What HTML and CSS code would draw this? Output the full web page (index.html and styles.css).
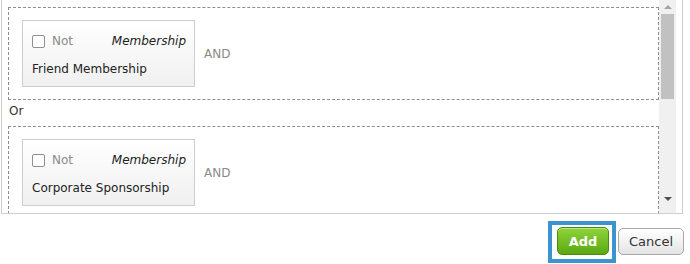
FILE: index.html
```html
<!DOCTYPE html>
<html>
<head>
<meta charset="utf-8">
<link rel="stylesheet" href="styles.css">
</head>
<body>
<div class="panel">
  <div class="content">
    <div class="group">
      <div class="card">
        <div class="card-top">
          <label class="not"><span class="box"></span>Not</label>
          <span class="type">Membership</span>
        </div>
        <div class="name">Friend Membership</div>
      </div>
      <span class="and">AND</span>
    </div>
    <div class="or">Or</div>
    <div class="group">
      <div class="card">
        <div class="card-top">
          <label class="not"><span class="box"></span>Not</label>
          <span class="type">Membership</span>
        </div>
        <div class="name">Corporate Sponsorship</div>
      </div>
      <span class="and">AND</span>
    </div>
  </div>
  <div class="scrollbar">
    <span class="arrow up"></span>
    <span class="thumb"></span>
    <span class="spacer"></span>
    <span class="arrow down"></span>
  </div>
</div>
<div class="footer">
  <span class="focus"><button class="btn add">Add</button></span>
  <button class="btn cancel">Cancel</button>
</div>
</body>
</html>
```
FILE: styles.css
```css
html, body {
  margin: 0;
  padding: 0;
  background: #fff;
  font-family: "DejaVu Sans", Verdana, sans-serif;
  font-size: 12px;
  color: #222;
}
.panel {
  margin: -1px 0 0 1px;
  width: 682px;
  height: 215px;
  box-sizing: border-box;
  border: 1px solid #cfcfcf;
  display: flex;
  padding-right: 6px;
  overflow: hidden;
}
.content {
  flex: 1;
  padding: 7px 0 0 6px;
  overflow: hidden;
}
.group {
  border: 1px dashed #8e8e8e;
  padding: 12px 13px;
  display: flex;
  align-items: center;
}
.card {
  width: 173px;
  height: 67px;
  box-sizing: border-box;
  border: 1px solid #cdcdcd;
  background: linear-gradient(#ffffff, #f0f0f0);
  padding: 12px 8px 0 9px;
}
.card-top {
  display: flex;
  justify-content: space-between;
  align-items: center;
  height: 16px;
}
.not {
  display: flex;
  align-items: center;
  color: #8a8a8a;
}
.box {
  width: 11px;
  height: 11px;
  border: 1px solid #8f8f8f;
  border-radius: 2px;
  background: #fff;
  margin-right: 7px;
}
.type {
  font-style: italic;
  color: #222;
}
.name {
  margin-top: 12px;
  line-height: 16px;
}
.and {
  margin-left: 9px;
  color: #8a8a8a;
}
.or {
  padding: 2px 0 6px 1px;
  line-height: 18px;
  color: #333;
}
.scrollbar {
  width: 17px;
  background: #f0f0f0;
  display: flex;
  flex-direction: column;
  align-items: center;
}
.arrow {
  width: 0;
  height: 0;
  border-left: 4px solid transparent;
  border-right: 4px solid transparent;
}
.up {
  border-bottom: 4px solid #a3a3a3;
  margin: 5px 0 5px;
}
.down {
  border-top: 4px solid #505050;
  margin: 4px 0 12px;
}
.thumb {
  width: 13px;
  height: 85px;
  background: #c1c1c1;
}
.spacer {
  flex: 1;
}
.footer {
  display: flex;
  justify-content: flex-end;
  align-items: flex-start;
  gap: 2px;
  padding: 7px 6px 0 0;
}
.focus {
  display: inline-flex;
  border: 4px solid #3b93d0;
  padding: 2px 3px 4px 5px;
}
.btn {
  font-family: "DejaVu Sans", Verdana, sans-serif;
  font-size: 13px;
  height: 28px;
  border-radius: 5px;
  cursor: pointer;
}
.add {
  width: 52px;
  border: 1px solid #4d8a0e;
  background: linear-gradient(#8fd43a, #5ca812);
  color: #fff;
  font-weight: bold;
  box-shadow: inset 0 1px 0 rgba(255,255,255,0.4);
}
.cancel {
  margin-top: 7px;
  width: 66px;
  height: 27px;
  border: 1px solid #a8a8a8;
  background: linear-gradient(#ffffff, #e4e4e4);
  color: #333;
}
```
